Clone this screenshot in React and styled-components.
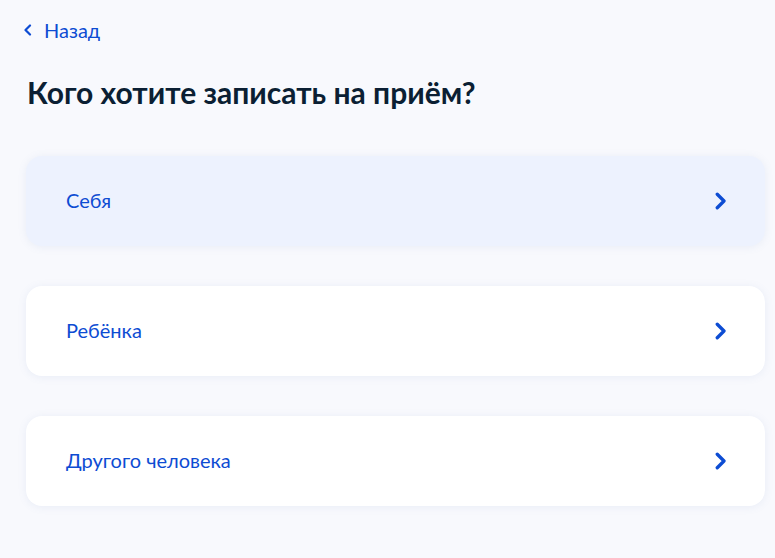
import React from "react"
import styled, { createGlobalStyle } from "styled-components"

const GlobalStyle = createGlobalStyle`
   html, body {
      margin: 0;
      padding: 0;
      background: #f8f9fd;
      font-family: Lato, "Noto Sans", sans-serif;
   }
`

const options = [
   { id: 1, label: "Себя", active: true },
   { id: 2, label: "Ребёнка" },
   { id: 3, label: "Другого человека" },
]

const Chevron = ({ dir = "right", size = 12 }) => (
   <svg width={size} height={size * 1.5} viewBox="0 0 8 12" fill="none">
      {dir === "right" ? (
         <path d="M1.5 1.5 L6 6 L1.5 10.5" stroke="currentColor" strokeWidth="2.2" strokeLinecap="round" strokeLinejoin="round" />
      ) : (
         <path d="M6 1.5 L1.5 6 L6 10.5" stroke="currentColor" strokeWidth="2.2" strokeLinecap="round" strokeLinejoin="round" />
      )}
   </svg>
)

const App = () => {
   return (
      <>
         <GlobalStyle />
         <Page>
            <BackLink href="#">
               <Chevron dir="left" size={8} />
               <span>Назад</span>
            </BackLink>
            <Title>Кого хотите записать на приём?</Title>
            <List>
               {options.map(o => (
                  <Card key={o.id} $active={o.active}>
                     <CardText>{o.label}</CardText>
                     <Arrow>
                        <Chevron size={12} />
                     </Arrow>
                  </Card>
               ))}
            </List>
         </Page>
      </>
   )
}

const Page = styled.div`
   padding: 18px 10px 40px 26px;
   display: flex;
   flex-direction: column;
`

const BackLink = styled.a`
   display: flex;
   align-items: center;
   gap: 12px;
   color: #0d4cd3;
   font-size: 20px;
   line-height: 24px;
   text-decoration: none;
   svg {
      margin-left: -2px;
      margin-top: -1px;
   }
`

const Title = styled.h1`
   margin: 32px 0 0 1px;
   font-size: 30px;
   font-weight: 700;
   line-height: 36px;
   color: #0b1f33;
`

const List = styled.div`
   margin-top: 46px;
   display: flex;
   flex-direction: column;
   gap: 40px;
`

const Card = styled.div`
   height: 90px;
   box-sizing: border-box;
   padding: 0 38px 0 40px;
   display: flex;
   align-items: center;
   justify-content: space-between;
   border-radius: 16px;
   background: ${p => (p.$active ? "#edf2fe" : "#ffffff")};
   box-shadow: 0 1px 8px rgba(102, 130, 190, 0.1);
   cursor: pointer;
`

const CardText = styled.span`
   font-size: 20px;
   line-height: 24px;
   color: #0d4cd3;
   margin-bottom: 3px;
`

const Arrow = styled.span`
   display: flex;
   color: #0d4cd3;
`

export default App
